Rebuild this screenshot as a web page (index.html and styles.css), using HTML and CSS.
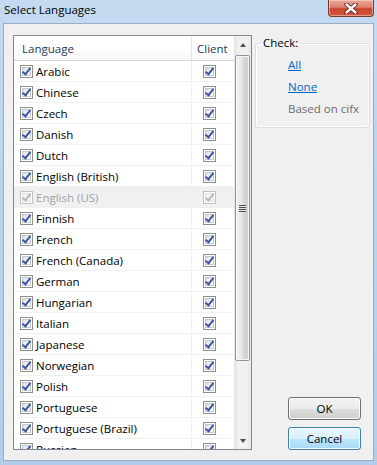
FILE: index.html
```html
<!DOCTYPE html>
<html lang="en">
<head>
    <meta charset="UTF-8">
    <title>Select Languages</title>
    <link rel="stylesheet" href="styles.css">
</head>
<body>
    <div class="window">
        <div class="titlebar">
            <span class="title">Select Languages</span>
            <button class="close" aria-label="Close">
                <svg width="14" height="11" viewBox="0 0 14 11">
                    <path d="M2.5 1.5 L11.5 9.5 M11.5 1.5 L2.5 9.5" stroke="#5a1f16" stroke-width="4.2" stroke-linecap="round"/>
                    <path d="M2.5 1.5 L11.5 9.5 M11.5 1.5 L2.5 9.5" stroke="#ffffff" stroke-width="2.4" stroke-linecap="round"/>
                </svg>
            </button>
        </div>

        <div class="client">
            <div class="listview">
                <div class="grid">
                    <div class="row head">
                        <div class="c-lang">Language</div>
                        <div class="c-client">Client</div>
                    </div>
                    <div class="row"><div class="c-lang"><span class="cb on"></span>Arabic</div><div class="c-client"><span class="cb on"></span></div></div>
                    <div class="row"><div class="c-lang"><span class="cb on"></span>Chinese</div><div class="c-client"><span class="cb on"></span></div></div>
                    <div class="row"><div class="c-lang"><span class="cb on"></span>Czech</div><div class="c-client"><span class="cb on"></span></div></div>
                    <div class="row"><div class="c-lang"><span class="cb on"></span>Danish</div><div class="c-client"><span class="cb on"></span></div></div>
                    <div class="row"><div class="c-lang"><span class="cb on"></span>Dutch</div><div class="c-client"><span class="cb on"></span></div></div>
                    <div class="row"><div class="c-lang"><span class="cb on"></span>English (British)</div><div class="c-client"><span class="cb on"></span></div></div>
                    <div class="row disabled"><div class="c-lang"><span class="cb on"></span>English (US)</div><div class="c-client"><span class="cb on"></span></div></div>
                    <div class="row"><div class="c-lang"><span class="cb on"></span>Finnish</div><div class="c-client"><span class="cb on"></span></div></div>
                    <div class="row"><div class="c-lang"><span class="cb on"></span>French</div><div class="c-client"><span class="cb on"></span></div></div>
                    <div class="row"><div class="c-lang"><span class="cb on"></span>French (Canada)</div><div class="c-client"><span class="cb on"></span></div></div>
                    <div class="row"><div class="c-lang"><span class="cb on"></span>German</div><div class="c-client"><span class="cb on"></span></div></div>
                    <div class="row"><div class="c-lang"><span class="cb on"></span>Hungarian</div><div class="c-client"><span class="cb on"></span></div></div>
                    <div class="row"><div class="c-lang"><span class="cb on"></span>Italian</div><div class="c-client"><span class="cb on"></span></div></div>
                    <div class="row"><div class="c-lang"><span class="cb on"></span>Japanese</div><div class="c-client"><span class="cb on"></span></div></div>
                    <div class="row"><div class="c-lang"><span class="cb on"></span>Norwegian</div><div class="c-client"><span class="cb on"></span></div></div>
                    <div class="row"><div class="c-lang"><span class="cb on"></span>Polish</div><div class="c-client"><span class="cb on"></span></div></div>
                    <div class="row"><div class="c-lang"><span class="cb on"></span>Portuguese</div><div class="c-client"><span class="cb on"></span></div></div>
                    <div class="row"><div class="c-lang"><span class="cb on"></span>Portuguese (Brazil)</div><div class="c-client"><span class="cb on"></span></div></div>
                    <div class="row"><div class="c-lang"><span class="cb on"></span>Russian</div><div class="c-client"><span class="cb on"></span></div></div>
                </div>

                <div class="scrollbar">
                    <div class="sb-btn up"></div>
                    <div class="sb-track">
                        <div class="sb-thumb"><span class="grip"></span></div>
                    </div>
                    <div class="sb-btn down"></div>
                </div>
            </div>

            <div class="side">
                <fieldset class="group">
                    <legend>Check:</legend>
                    <div class="links">
                        <a href="#">All</a>
                        <a href="#">None</a>
                        <span class="muted">Based on cifx</span>
                    </div>
                </fieldset>

                <div class="buttons">
                    <button class="btn">OK</button>
                    <button class="btn focused">Cancel</button>
                </div>
            </div>
        </div>
    </div>
</body>
</html>
```

FILE: styles.css
```css
/* Windows 7 style dialog */
body {
    margin: 0;
    font-family: "Segoe UI", "Open Sans", "Liberation Sans", sans-serif;
    font-size: 11.5px;
    color: #000;
}

.window {
    width: 377px;
    height: 465px;
    display: flex;
    flex-direction: column;
    background: linear-gradient(180deg, #c4daf1 0%, #bcd3ed 40%, #b3cce9 100%);
    box-sizing: border-box;
    overflow: hidden;
}

/* Title bar */
.titlebar {
    height: 23px;
    flex: none;
    display: flex;
    align-items: flex-start;
    justify-content: space-between;
    padding: 0 3px 0 4px;
}

.title {
    line-height: 19px;
    color: #000;
}

.close {
    width: 46px;
    height: 17px;
    padding: 0;
    border: 1px solid #7a3a2f;
    border-top: none;
    border-radius: 0 0 4px 4px;
    background: linear-gradient(180deg, #e9a99b 0%, #dc7f6c 45%, #c8462f 55%, #d2583e 100%);
    box-shadow: inset 0 0 0 1px rgba(255, 220, 210, 0.5);
    display: flex;
    align-items: center;
    justify-content: center;
}

/* Client area */
.client {
    flex: 1;
    min-height: 0;
    margin: 0 3px 4px 3px;
    border: 1px solid #98adc6;
    background: #f0f0f0;
    display: flex;
    gap: 3px;
    padding: 11px 3px 10px 9px;
}

/* List view */
.listview {
    width: 239px;
    box-sizing: border-box;
    border: 1px solid #828790;
    background: #fff;
    display: flex;
    overflow: hidden;
}

.grid {
    flex: 1;
    overflow: hidden;
}

.row {
    display: flex;
    height: 21px;
    box-sizing: border-box;
    border-bottom: 1px solid #f0f0f0;
    align-items: center;
}

.c-lang {
    width: 177px;
    height: 100%;
    display: flex;
    align-items: center;
    gap: 3px;
    padding-left: 6px;
    box-sizing: border-box;
}

.c-client {
    flex: 1;
    height: 100%;
    display: flex;
    align-items: center;
    padding-left: 11px;
    border-left: 1px solid #f0f0f0;
}

.row.head {
    height: 25px;
    border-bottom: 1px solid #d5d5d5;
    background: linear-gradient(180deg, #ffffff 0%, #ffffff 55%, #f6f7f9 100%);
    color: #1e395b;
}

.row.head .c-lang {
    padding-left: 8px;
}

.row.head .c-client {
    padding-left: 5px;
    border-left: 1px solid #e3e8ee;
}

.row.disabled {
    background: #f0f0f0;
    color: #a3a3a3;
}

/* Check boxes */
.cb {
    width: 13px;
    height: 13px;
    flex: none;
    box-sizing: border-box;
    border: 1px solid #8e8f8f;
    background: #fff;
    position: relative;
}

.cb::before {
    content: "";
    position: absolute;
    inset: 1px;
    border: 1px solid #c3c8cf;
    background: linear-gradient(135deg, #dcdfe3 0%, #f4f5f6 60%, #ffffff 100%);
}

.cb.on::after {
    content: "";
    position: absolute;
    left: 3px;
    top: 0px;
    width: 3px;
    height: 7px;
    border: solid #3d56a3;
    border-width: 0 2px 2px 0;
    transform: rotate(38deg);
}

.disabled .cb {
    border-color: #c2c2c2;
}

.disabled .cb::before {
    border-color: #e3e3e3;
    background: #f4f4f4;
}

.disabled .cb.on::after {
    border-color: #b8b8b8;
}

/* Scroll bar */
.scrollbar {
    width: 17px;
    flex: none;
    display: flex;
    flex-direction: column;
    background: linear-gradient(90deg, #e4e4e4 0%, #f2f2f2 30%, #f2f2f2 70%, #e8e8e8 100%);
}

.sb-btn {
    height: 17px;
    flex: none;
    display: flex;
    align-items: center;
    justify-content: center;
}

.sb-btn::after {
    content: "";
    border-left: 3.5px solid transparent;
    border-right: 3.5px solid transparent;
}

.sb-btn.up::after {
    border-bottom: 4px solid #4d4d4d;
}

.sb-btn.down::after {
    border-top: 4px solid #4d4d4d;
}

.sb-track {
    flex: 1;
    padding: 2px 1px 0 1px;
}

.sb-thumb {
    height: 306px;
    box-sizing: border-box;
    border: 1px solid #979797;
    border-radius: 2px;
    background: linear-gradient(90deg, #f1f1f1 0%, #e8e8e8 45%, #d8d8d8 55%, #cfcfcf 100%);
    box-shadow: inset 0 0 0 1px #f6f6f6;
    display: flex;
    align-items: center;
    justify-content: center;
}

.grip {
    width: 7px;
    height: 7px;
    background: repeating-linear-gradient(180deg, #4f4f4f 0, #4f4f4f 1px, #e6e6e6 1px, #e6e6e6 2px);
}

/* Side panel */
.side {
    width: 115px;
    display: flex;
    flex-direction: column;
}

.group {
    margin: 0;
    padding: 6px 0 10px 0;
    border: 1px solid #d5dfe5;
    border-radius: 3px;
    box-shadow: inset 0 0 0 1px #fff;
    line-height: 16px;
}

.group legend {
    margin-left: 5px;
    padding: 0 2px;
    line-height: 16px;
}

.links {
    display: flex;
    flex-direction: column;
    align-items: flex-start;
    gap: 6px;
    padding-left: 32px;
}

.links a {
    color: #0066cc;
    text-decoration: underline;
}

.muted {
    color: #6d6d6d;
}

.buttons {
    margin-top: auto;
    display: flex;
    flex-direction: column;
    gap: 7px;
    padding-left: 33px;
}

.btn {
    width: 73px;
    height: 23px;
    font: inherit;
    color: #000;
    border: 1px solid #707070;
    border-radius: 3px;
    background: linear-gradient(180deg, #f2f2f2 0%, #ebebeb 50%, #dddddd 51%, #cfcfcf 100%);
    box-shadow: inset 0 0 0 1px #fcfcfc;
    padding: 0;
}

.btn.focused {
    border-color: #3c7fb1;
    background: linear-gradient(180deg, #eaf6fd 0%, #d9f0fc 50%, #bee6fd 51%, #a7d9f5 100%);
    box-shadow: inset 0 0 0 1px #fff;
}
```
